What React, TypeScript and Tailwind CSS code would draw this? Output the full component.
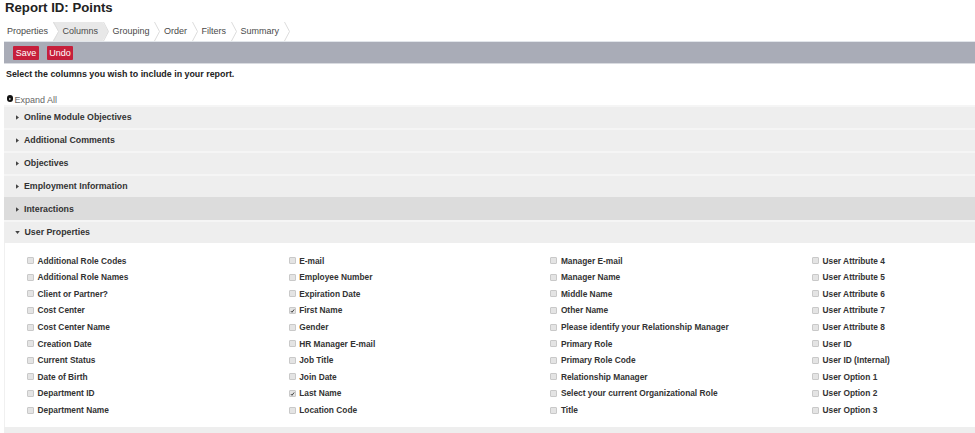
const tabs = ["Properties", "Columns", "Grouping", "Order", "Filters", "Summary"];

const sections = [
  "Online Module Objectives",
  "Additional Comments",
  "Objectives",
  "Employment Information",
  "Interactions",
];

const columns: string[][] = [
  [
    "Additional Role Codes",
    "Additional Role Names",
    "Client or Partner?",
    "Cost Center",
    "Cost Center Name",
    "Creation Date",
    "Current Status",
    "Date of Birth",
    "Department ID",
    "Department Name",
  ],
  [
    "E-mail",
    "Employee Number",
    "Expiration Date",
    "First Name",
    "Gender",
    "HR Manager E-mail",
    "Job Title",
    "Join Date",
    "Last Name",
    "Location Code",
  ],
  [
    "Manager E-mail",
    "Manager Name",
    "Middle Name",
    "Other Name",
    "Please identify your Relationship Manager",
    "Primary Role",
    "Primary Role Code",
    "Relationship Manager",
    "Select your current Organizational Role",
    "Title",
  ],
  [
    "User Attribute 4",
    "User Attribute 5",
    "User Attribute 6",
    "User Attribute 7",
    "User Attribute 8",
    "User ID",
    "User ID (Internal)",
    "User Option 1",
    "User Option 2",
    "User Option 3",
  ],
];

const checked = new Set(["First Name", "Last Name"]);

function Separator() {
  return (
    <svg className="-mx-[3px] w-[6px] h-[19px] shrink-0 relative z-10" viewBox="0 0 6 19">
      <polyline points="0.5,0 5.5,9.5 0.5,19" fill="none" stroke="#dcdcdc" strokeWidth="1" />
    </svg>
  );
}

function Checkbox({ on }: { on: boolean }) {
  return (
    <span className="w-[7px] h-[7px] shrink-0 rounded-[1px] border border-[#c9c9c9] bg-[#e4e4e4] flex items-center justify-center">
      {on && (
        <svg viewBox="0 0 7 7" className="w-[6px] h-[6px]">
          <polyline points="1.2,3.6 2.8,5.3 5.8,1.4" fill="none" stroke="#333" strokeWidth="1.3" />
        </svg>
      )}
    </span>
  );
}

export default function App() {
  return (
    <div className="w-[975px] h-[433px] overflow-hidden bg-white font-['Liberation_Sans',Arial,sans-serif] text-[#333]">
      <div className="pl-[5px] h-[22px] pt-[0.5px]">
        <h1 className="text-[13.2px] leading-[13px] font-bold text-[#222]">Report ID: Points</h1>
      </div>

      <div className="flex h-[19px] text-[9px] text-[#4a4a4a]">
        {tabs.map((t) => (
          <div key={t} className="flex">
            {t === "Columns" ? (
              <div className="-ml-[3px] -mr-[3px] pl-[10px] pr-[10.5px] h-[19px] flex items-center bg-[#e8e8e8] [clip-path:polygon(0_0,calc(100%-6px)_0,100%_50%,calc(100%-6px)_100%,0_100%,6px_50%)]">
                {t}
              </div>
            ) : (
              <div className="pl-[7px] pr-[7.5px] h-[19px] flex items-center">{t}</div>
            )}
            <Separator />
          </div>
        ))}
      </div>

      <div className="ml-[4px] border-t border-[#e1e5ea] bg-[#a9acb7] h-[23px] border-b border-b-[#d9dbe0] flex items-center gap-[8px] pl-[9px]">
        <button className="w-[26px] h-[13.5px] bg-[#c61f3b] text-white text-[9px] leading-[13px] rounded-[1px] mt-[1px]">
          Save
        </button>
        <button className="w-[26px] h-[13.5px] bg-[#c61f3b] text-white text-[9px] leading-[13px] rounded-[1px] mt-[1px]">
          Undo
        </button>
      </div>

      <p className="pl-[6px] mt-[6px] text-[8.9px] leading-[9px] font-bold text-[#222]">
        Select the columns you wish to include in your report.
      </p>

      <div className="flex items-center mt-[15px] pl-[6.5px] h-[9px]">
        <span className="w-[6.5px] h-[6.5px] rounded-full bg-[#111] flex items-center justify-center">
          <svg viewBox="0 0 6 6" className="w-[4px] h-[4px]">
            <polygon points="2,1 4.5,3 2,5" fill="#fff" />
          </svg>
        </span>
        <span className="ml-[1.5px] mt-[3px] text-[9px] leading-[9px] text-[#666]">Expand All</span>
      </div>

      <div className="ml-[4px] mt-[2px]">
        {sections.map((s) => (
          <div
            key={s}
            className={`h-[23px] flex items-center pl-[12px] border-t-2 ${
              s === "Interactions" ? "bg-[#dcdcdc] border-[#dcdcdc]" : "bg-[#eeeeee] border-[#f5f5f5]"
            }`}
          >
            <svg viewBox="0 0 4 6" className="w-[3px] h-[5px]">
              <polygon points="0,0 4,3 0,6" fill="#444" />
            </svg>
            <span className="ml-[5px] text-[8.8px] font-bold text-[#333]">{s}</span>
          </div>
        ))}
        <div className="h-[23px] flex items-center pl-[11px] border-t-2 bg-[#eeeeee] border-[#f5f5f5]">
          <svg viewBox="0 0 6 4" className="w-[5px] h-[3px]">
            <polygon points="0,0 6,0 3,4" fill="#444" />
          </svg>
          <span className="ml-[4.5px] text-[8.8px] font-bold text-[#333]">User Properties</span>
        </div>

        <div className="border-l border-[#f0f0f0] pt-[9.5px] pb-[8.5px] pl-[22px] grid grid-cols-[repeat(4,261.7px)]">
          {columns.map((col, ci) => (
            <div key={ci} className="flex flex-col">
              {col.map((label) => (
                <div key={label} className="h-[16.6px] flex items-center gap-[3.5px]">
                  <Checkbox on={checked.has(label)} />
                  <span className="text-[8.35px] font-bold text-[#333] whitespace-nowrap">{label}</span>
                </div>
              ))}
            </div>
          ))}
        </div>
        <div className="h-[10px] bg-[#eeeeee]" />
      </div>
    </div>
  );
}
